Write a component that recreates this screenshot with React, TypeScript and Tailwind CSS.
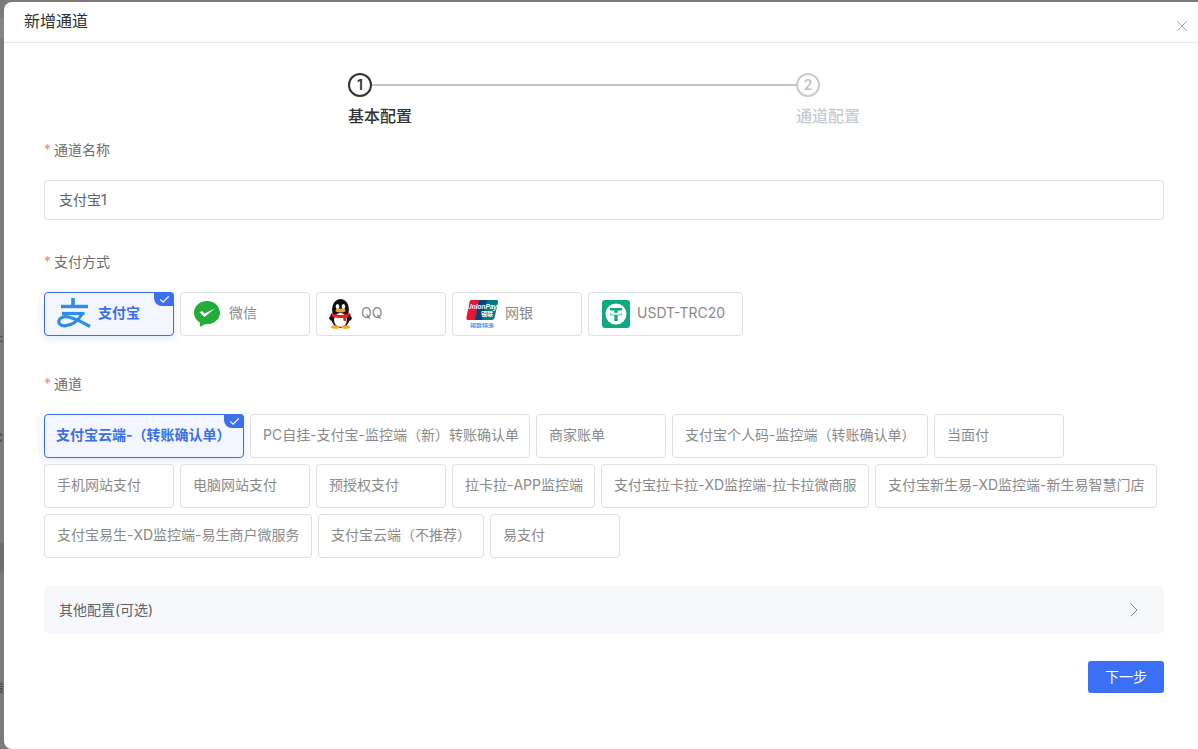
import React from "react";
import { ChevronRight, X } from "lucide-react";

function Corner() {
  return (
    <span className="absolute -top-px -right-px flex h-[14px] w-5 items-center justify-center rounded-tr-[4px] rounded-bl-[8px] bg-[#3b6ff0]">
      <svg width="11" height="9" viewBox="0 0 11 9" fill="none">
        <path d="M1.2 4.4 4.1 7.2 9.8 1.4" stroke="#fff" strokeWidth="1.3" />
      </svg>
    </span>
  );
}

function Option({ label, selected, icon, w }: { label: string; selected?: boolean; icon?: React.ReactNode; w?: string }) {
  return (
    <div
      className={
        "relative flex h-11 shrink-0 items-center rounded-[4px] border text-sm whitespace-nowrap " +
        (w ?? "min-w-[130px]") +
        " " +
        (selected
          ? "border-[#3b6fe8] bg-[#f3f6ff] px-[11px] font-bold text-[#3b6fe8] shadow-[0_2px_8px_rgba(59,111,232,0.18)]"
          : "border-[#dfdfdf] bg-white px-3 text-[#8a8a8a]")
      }
    >
      {icon}
      <span className="mb-[2px]">{label}</span>
      {selected && <Corner />}
    </div>
  );
}

function Label({ children }: { children: string }) {
  return (
    <div className="flex h-5 items-center text-sm leading-5 text-[#6b6e73]">
      <span className="mr-[5px] w-[5px] text-[#f08a8a]">*</span>
      {children}
    </div>
  );
}

const Alipay = (
  <svg className="mt-[-2px] mr-[7px] ml-[1px]" width="34" height="30" viewBox="0 0 34 30" fill="none">
    <path d="M16 0v9" stroke="#2f8de6" strokeWidth="3.600" />
    <path d="M4 8.500h27" stroke="#2f8de6" strokeWidth="3.400" />
    <path d="M5 15.500h22.500" stroke="#2f8de6" strokeWidth="3.200" />
    <path
      d="M25.500 15.500C21 23 15 27.500 8 27.800c-4.500.2-6.800-2.300-6-5.200.9-3.200 5-4.600 9.500-3.600 6.500 1.400 13.500 5 21.500 9.500"
      stroke="#2f8de6"
      strokeWidth="3.200"
    />
  </svg>
);

const Wechat = (
  <svg className="mr-[9px] ml-[1px]" width="26" height="26" viewBox="0 0 26 26">
    <path d="M13 0C5.800 0 0 5.300 0 11.800c0 4 2.200 7.500 5.600 9.600L6.500 26l4.500-3c.7.100 1.300.2 2 .2 7.200 0 13-5 13-11.400S20.200 0 13 0Z" fill="#22ac38" />
    <path d="M5.500 11.500 10.500 16 21 7.500l-10.500 5-2.500-2.500Z" fill="#fff" />
  </svg>
);

const QQ = (
  <svg className="mr-[8px] ml-[-1px]" width="25" height="30" viewBox="0 0 25 30">
    <ellipse cx="12.500" cy="10.500" rx="8.500" ry="10.500" fill="#111" />
    <ellipse cx="12.500" cy="20" rx="9" ry="9" fill="#111" />
    <ellipse cx="12.500" cy="21" rx="6.500" ry="7" fill="#fff" />
    <ellipse cx="9.500" cy="7.500" rx="1.800" ry="2.600" fill="#fff" />
    <ellipse cx="15.500" cy="7.500" rx="1.800" ry="2.600" fill="#fff" />
    <ellipse cx="12.500" cy="11.500" rx="5" ry="1.900" fill="#f5a623" />
    <path d="M3 14c5 2.500 14 2.500 19 0l.8 2.800c-1.500.9-3 1.500-4.800 1.800l.5 4-3-1-.3-2.700c-3 .3-6.700.1-9.700-.6-1.400-.4-2.700-1-3.200-1.500Z" fill="#e2231a" />
    <path d="M1 19 4 15l1 7c-1.500.500-3.500-1-4-3ZM24 19l-3-4-1 7c1.500.500 3.500-1 4-3Z" fill="#111" />
    <ellipse cx="7.500" cy="28" rx="4.500" ry="1.800" fill="#f5a623" />
    <ellipse cx="17.500" cy="28" rx="4.500" ry="1.800" fill="#f5a623" />
  </svg>
);

const Union = (
  <svg className="mr-[7px] ml-[1px]" width="32" height="28" viewBox="0 0 32 28">
    <path d="M5 0h10L10 20H2Q0 20 .3 18L3.500 2Q4 0 5 0Z" fill="#e21836" />
    <path d="M13 0h10l-5 20H9Z" fill="#00447c" />
    <path d="M21 0h10q1.500 0 1 2L28.500 18Q28 20 26 20H16Z" fill="#007b84" />
    <text x="16" y="9" textAnchor="middle" fontSize="6.500" fontWeight="700" fontStyle="italic" fill="#fff" fontFamily="Liberation Sans, sans-serif">UnionPay</text>
    <text x="21" y="16" textAnchor="middle" fontSize="6" fontWeight="700" fill="#fff" fontFamily="Noto Sans CJK SC, sans-serif">银联</text>
    <text x="16" y="27.500" textAnchor="middle" fontSize="6" fontWeight="700" fill="#4a9bf0" fontFamily="Noto Sans CJK SC, sans-serif">银联特惠</text>
  </svg>
);

const Tether = (
  <svg className="mr-[7px] ml-px" width="28" height="28" viewBox="0 0 28 28">
    <rect width="28" height="28" rx="3" fill="#0fa981" />
    <circle cx="14" cy="14" r="10.500" fill="#fff" />
    <path d="M8 8h12v2.600h-4.400v2.100c2.600.2 4.800.7 4.800 1.400s-2.200 1.200-4.800 1.400V21h-3.200v-5.500c-2.600-.2-4.800-.7-4.800-1.400s2.200-1.200 4.800-1.400v-2.100H8Z" fill="#0fa981" />
    <ellipse cx="14" cy="13.700" rx="5.200" ry="1" fill="#fff" />
  </svg>
);

export default function App() {
  const stack = { fontFamily: '"Inter", "Noto Sans CJK SC", sans-serif' };
  return (
    <div style={stack} className="relative h-[749px] w-[1198px] overflow-hidden bg-[#7b7b7b] pt-[2px] pl-[4px]">
      <span className="absolute top-[18px] left-0 h-5 w-1 bg-[#84868c]" />
      <span className="absolute top-[543px] left-0 h-[29px] w-1 bg-[#6f6f74]" />
      <span className="absolute top-[330px] left-[-4px] text-xs text-[#3c3c3c]">::</span>
      <span className="absolute top-[430px] left-[-6px] text-xs text-[#3c3c3c]">C</span>
      <span className="absolute top-[680px] left-[-9px] text-xs text-[#3c3c3c]">端</span>

      <div className="relative flex h-[747px] flex-col rounded-tl-[8px] rounded-bl-[8px] bg-white">
        <header className="relative flex h-[41px] shrink-0 items-center border-b border-[#e6e6e6] pb-[2px] pl-5 text-base text-[#303133]">
          新增通道
          <X className="absolute top-[15px] right-[7px] text-[#a0a0a0]" size={18} strokeWidth={1.3} />
        </header>

        <main className="flex flex-1 flex-col pt-[30px] pr-[34px] pl-10">
          <div className="flex flex-col pl-[304px]">
            <div className="flex h-6 w-[472px] items-center">
              <span className="flex h-6 w-6 shrink-0 items-center justify-center rounded-full border-2 border-[#303133] text-sm font-semibold text-[#303133]">1</span>
              <span className="h-0.5 flex-1 bg-[#c0c4cc]" />
              <span className="flex h-6 w-6 shrink-0 items-center justify-center rounded-full border-2 border-[#c8cbd2] text-sm font-semibold text-[#c0c4cc]">2</span>
            </div>
            <div className="mt-[7px] flex h-6 w-[512px] items-center justify-between text-base leading-6">
              <span className="font-medium text-[#303133]">基本配置</span>
              <span className="font-medium text-[#c8cbd2]">通道配置</span>
            </div>
          </div>

          <div className="mt-[12px]"><Label>通道名称</Label></div>
          <div className="mt-5 flex h-10 w-[1120px] items-center rounded-[4px] border border-[#dcdfe6] px-[14px] text-sm text-[#606266]">支付宝1</div>

          <div className="mt-[32px]"><Label>支付方式</Label></div>
          <div className="mt-5 flex gap-[6px]">
            <Option label="支付宝" selected icon={Alipay} />
            <Option label="微信" icon={Wechat} />
            <Option label="QQ" icon={QQ} />
            <Option label="网银" icon={Union} />
            <Option label="USDT-TRC20" icon={Tether} w="w-[155px]" />
          </div>

          <div className="mt-[38px]"><Label>通道</Label></div>
          <div className="mt-5 flex w-[1120px] flex-wrap gap-[6px]">
            <Option label="支付宝云端-（转账确认单）" selected w="w-[200px]" />
            <Option label="PC自挂-支付宝-监控端（新）转账确认单" w="w-[280px]" />
            <Option label="商家账单" />
            <Option label="支付宝个人码-监控端（转账确认单）" w="w-[256px]" />
            <Option label="当面付" />
            <Option label="手机网站支付" />
            <Option label="电脑网站支付" />
            <Option label="预授权支付" />
            <Option label="拉卡拉-APP监控端" w="w-[143px]" />
            <Option label="支付宝拉卡拉-XD监控端-拉卡拉微商服" w="w-[268px]" />
            <Option label="支付宝新生易-XD监控端-新生易智慧门店" w="w-[282px]" />
            <Option label="支付宝易生-XD监控端-易生商户微服务" w="w-[268px]" />
            <Option label="支付宝云端（不推荐）" w="w-[166px]" />
            <Option label="易支付" />
          </div>

          <div className="mt-7 flex h-12 w-[1120px] items-center justify-between rounded-[6px] bg-[#f7f8fc] pr-[18px] pl-[15px] text-sm text-[#606266]">
            其他配置(可选)
            <ChevronRight size={24} strokeWidth={1} className="text-[#808080]" />
          </div>

          <div className="mt-[27px] flex w-[1120px] justify-end">
            <button className="h-8 w-[76px] rounded-[3px] bg-[#3b6ff5] text-sm text-white">下一步</button>
          </div>
        </main>
      </div>
    </div>
  );
}
